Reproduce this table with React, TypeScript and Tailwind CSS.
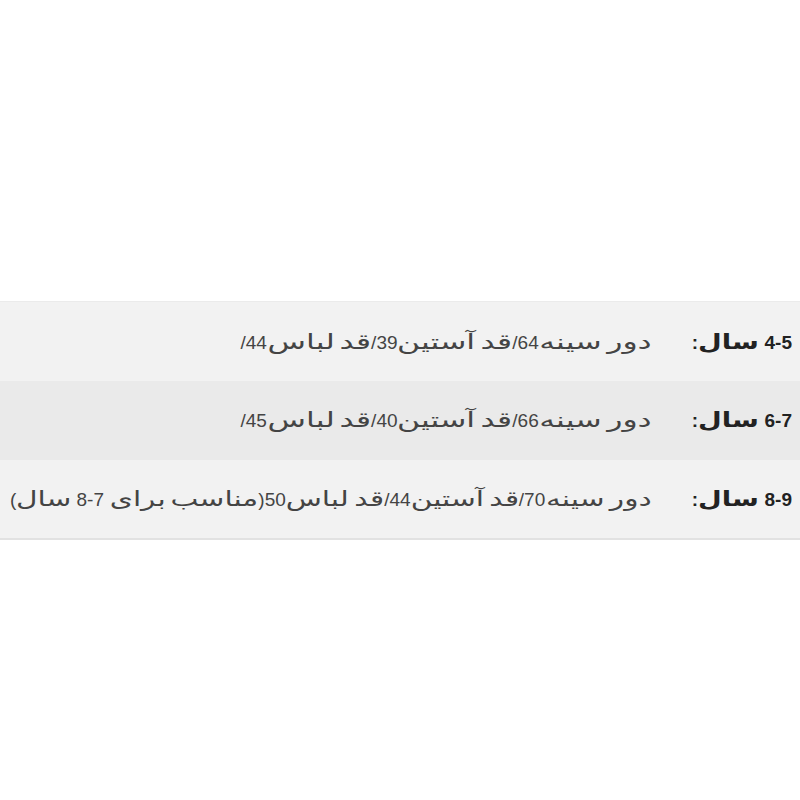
import React, { useLayoutEffect, useRef, useState } from "react";

const rows = [
  { label: "4-5 سال:", value: "دور سینه64/قد آستین39/قد لباس44/", bg: "bg-[#f2f2f2]", scale: 1.5 },
  { label: "6-7 سال:", value: "دور سینه66/قد آستین40/قد لباس45/", bg: "bg-[#eaeaea]", scale: 1.5 },
  {
    label: "8-9 سال:",
    value: "دور سینه70/قد آستین44/قد لباس50(مناسب برای \u061C7-8 سال)",
    bg: "bg-[#f2f2f2]",
    scale: 1.41,
  },
];

function Ar({ text, size, scale }: { text: string; size: string; scale: number }) {
  const inner = useRef<HTMLSpanElement>(null);
  const [w, setW] = useState<number | null>(null);
  useLayoutEffect(() => {
    if (inner.current) setW(inner.current.offsetWidth * scale);
  }, [text, scale]);
  return (
    <span className={`inline-block whitespace-nowrap ${size}`} style={w !== null ? { width: w } : undefined}>
      <span ref={inner} className="inline-block origin-right" style={{ transform: `scaleX(${scale})` }}>
        {text}
      </span>
    </span>
  );
}

function Mixed({ text, size, scale }: { text: string; size: string; scale: number }) {
  const parts = text.split(/([\u0621-\u06FF]+)/).filter((p) => p.length > 0);
  return (
    <>
      {parts.map((p, i) =>
        /[\u0621-\u06FF]/.test(p) ? (
          <Ar key={i} text={p} size={size} scale={scale} />
        ) : (
          <span key={i}>{p}</span>
        )
      )}
    </>
  );
}

export default function App() {
  return (
    <div
      className="w-[800px] h-[800px] bg-white pt-[301px] overflow-hidden"
      style={{ fontFamily: '"Liberation Sans", "DejaVu Sans", sans-serif' }}
    >
      <table
        dir="rtl"
        className="w-full table-fixed border-collapse border-t border-t-[#ebebeb] border-b-2 border-b-[#e2e2e2]"
      >
        <colgroup>
          <col className="w-[148px]" />
          <col />
        </colgroup>
        <tbody>
          {rows.map((r) => (
            <tr key={r.label} className={`${r.bg} h-[79px]`}>
              <th className="pr-[8px] text-right align-middle font-bold text-[19px] text-[#222] whitespace-nowrap">
                <Mixed text={r.label} size="text-[21px]" scale={1.3} />
              </th>
              <td className="text-right align-middle text-[19px] text-[#444] whitespace-nowrap">
                <Mixed text={r.value} size="text-[21px]" scale={r.scale} />
              </td>
            </tr>
          ))}
        </tbody>
      </table>
    </div>
  );
}
